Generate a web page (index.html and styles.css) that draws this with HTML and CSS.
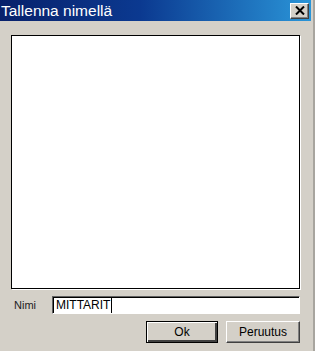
FILE: index.html
```html
<!DOCTYPE html>
<html>
<head>
<meta charset="utf-8">
<link rel="stylesheet" href="styles.css">
</head>
<body>
<div class="window">
  <div class="titlebar">
    <span class="title">Tallenna nimellä</span>
    <span class="close">
      <svg width="10" height="9" viewBox="0 0 10 9"><path d="M1 0.5 L9 8.5 M9 0.5 L1 8.5" stroke="#000" stroke-width="2"/></svg>
    </span>
  </div>
  <div class="content">
    <div class="list"></div>
    <div class="namerow">
      <span class="label">Nimi</span>
      <div class="input"><span class="text">MITTARIT</span><span class="caret"></span></div>
    </div>
    <div class="buttons">
      <div class="btn default"><span>Ok</span></div>
      <div class="btn"><span>Peruutus</span></div>
    </div>
  </div>
</div>
</body>
</html>
```
FILE: styles.css
```css
html, body {
  margin: 0;
  padding: 0;
  background: #d4d0c8;
}
.window {
  width: 315px;
  height: 351px;
  box-sizing: border-box;
  background: #d4d0c8;
  border-right: 2px solid #a8a59f;
  display: flex;
  flex-direction: column;
  font-family: "Liberation Sans", Arial, sans-serif;
}
.titlebar {
  height: 21px;
  width: 311px;
  background: linear-gradient(to right, #08216b 0%, #0b3990 45%, #2a95d8 100%);
  display: flex;
  align-items: center;
  justify-content: space-between;
  padding: 0 2px 0 1px;
  box-sizing: border-box;
}
.title {
  color: #fff;
  font-size: 15.5px;
  line-height: 21px;
}
.close {
  width: 19px;
  height: 16px;
  box-sizing: border-box;
  background: #d4d0c8;
  border-top: 1px solid #fff;
  border-left: 1px solid #fff;
  border-right: 1px solid #404040;
  border-bottom: 1px solid #404040;
  box-shadow: inset -1px -1px 0 #808080;
  display: flex;
  align-items: center;
  justify-content: center;
}
.content {
  padding: 14px 13px 0 11px;
  display: flex;
  flex-direction: column;
}
.list {
  height: 254px;
  box-sizing: border-box;
  background: #fff;
  border: 1px solid #000;
  box-shadow: 1px 1px 0 #fff;
}
.namerow {
  margin-top: 7px;
  display: flex;
  align-items: center;
}
.label {
  width: 41px;
  padding-left: 3px;
  box-sizing: border-box;
  font-size: 11px;
  color: #222;
}
.input {
  flex: 1;
  height: 18px;
  box-sizing: border-box;
  background: #fff;
  border-top: 1px solid #606060;
  border-left: 1px solid #606060;
  border-right: 1px solid #fff;
  border-bottom: 1px solid #fff;
  box-shadow: inset 1px 1px 0 #000;
  display: flex;
  align-items: center;
  padding-left: 3px;
  font-size: 12px;
  color: #000;
}
.caret {
  width: 1px;
  height: 15px;
  background: #000;
  margin-left: 1px;
}
.buttons {
  margin-top: 7px;
  display: flex;
  justify-content: flex-end;
  gap: 8px;
}
.btn {
  height: 22px;
  box-sizing: border-box;
  background: #d4d0c8;
  border-top: 1px solid #fff;
  border-left: 1px solid #fff;
  border-right: 1px solid #404040;
  border-bottom: 1px solid #404040;
  box-shadow: inset -1px -1px 0 #808080;
  display: flex;
  align-items: center;
  justify-content: center;
  font-size: 12px;
  color: #000;
  width: 74px;
}
.btn.default {
  width: 72px;
  border: 1px solid #000;
  box-shadow: inset 1px 1px 0 #fff, inset -2px -2px 0 #404040, inset -1px -1px 0 #000;
}
```
